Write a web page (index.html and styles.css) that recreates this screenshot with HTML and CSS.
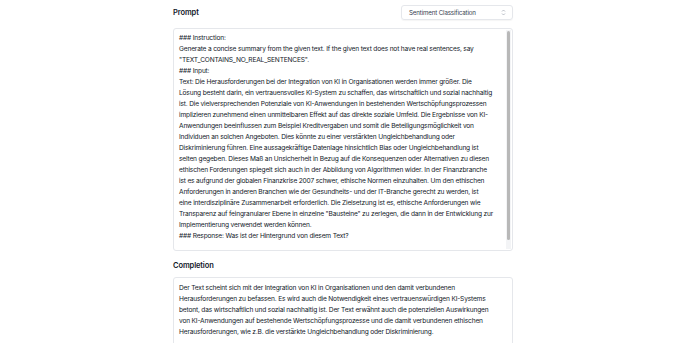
FILE: index.html
```html
<!DOCTYPE html>
<html>
<head>
<meta charset="utf-8">
<link rel="stylesheet" href="styles.css">
</head>
<body>
<div class="page">
  <div class="header">
    <div class="label">Prompt</div>
    <div class="select">
      <span>Sentiment Classification</span>
      <svg class="chev" width="5" height="7" viewBox="0 0 5 7"><path d="M1 2.5 L2.5 1 L4 2.5 M1 4.5 L2.5 6 L4 4.5" fill="none" stroke="#9ca3af" stroke-width="0.7"/></svg>
    </div>
  </div>
  <div class="box prompt">
    <div class="text">### Instruction:
Generate a concise summary from the given text. If the given text does not have real sentences, say
"TEXT_CONTAINS_NO_REAL_SENTENCES".
### Input:
Text: Die Herausforderungen bei der Integration von KI in Organisationen werden immer größer. Die
Lösung besteht darin, ein vertrauensvolles KI-System zu schaffen, das wirtschaftlich und sozial nachhaltig
ist. Die vielversprechenden Potenziale von KI-Anwendungen in bestehenden Wertschöpfungsprozessen
implizieren zunehmend einen unmittelbaren Effekt auf das direkte soziale Umfeld. Die Ergebnisse von KI-
Anwendungen beeinflussen zum Beispiel Kreditvergaben und somit die Beteiligungsmöglichkeit von
Individuen an solchen Angeboten. Dies könnte zu einer verstärkten Ungleichbehandlung oder
Diskriminierung führen. Eine aussagekräftige Datenlage hinsichtlich Bias oder Ungleichbehandlung ist
selten gegeben. Dieses Maß an Unsicherheit in Bezug auf die Konsequenzen oder Alternativen zu diesen
ethischen Forderungen spiegelt sich auch in der Abbildung von Algorithmen wider. In der Finanzbranche
ist es aufgrund der globalen Finanzkrise 2007 schwer, ethische Normen einzuhalten. Um den ethischen
Anforderungen in anderen Branchen wie der Gesundheits- und der IT-Branche gerecht zu werden, ist
eine interdisziplinäre Zusammenarbeit erforderlich. Die Zielsetzung ist es, ethische Anforderungen wie
Transparenz auf feingranularer Ebene in einzelne "Bausteine" zu zerlegen, die dann in der Entwicklung zur
Implementierung verwendet werden können.
### Response: Was ist der Hintergrund von diesem Text?
</div>
    <div class="scroll"><div class="thumb"></div></div>
  </div>
  <div class="label completion-label">Completion</div>
  <div class="box completion">
    <div class="text">Der Text scheint sich mit der Integration von KI in Organisationen und den damit verbundenen
Herausforderungen zu befassen. Es wird auch die Notwendigkeit eines vertrauenswürdigen KI-Systems
betont, das wirtschaftlich und sozial nachhaltig ist. Der Text erwähnt auch die potenziellen Auswirkungen
von KI-Anwendungen auf bestehende Wertschöpfungsprozesse und die damit verbundenen ethischen
Herausforderungen, wie z.B. die verstärkte Ungleichbehandlung oder Diskriminierung.</div>
  </div>
</div>
</body>
</html>
```

FILE: styles.css
```css
html, body {
  margin: 0;
  padding: 0;
  background: #ffffff;
}
body {
  font-family: Inter, "Noto Sans", sans-serif;
  color: #111827;
  overflow: hidden;
}
.page {
  width: 340px;
  margin: 0 auto;
  padding-top: 4px;
}
.header {
  display: flex;
  justify-content: space-between;
  align-items: center;
  height: 16px;
}
.label {
  font-size: 7.5px;
  font-weight: 600;
  letter-spacing: -0.1px;
  color: #111827;
}
.select {
  width: 112px;
  height: 15px;
  box-sizing: border-box;
  border: 1px solid #e5e7eb;
  border-radius: 3px;
  box-shadow: 0 1px 1px rgba(0,0,0,0.04);
  display: flex;
  align-items: center;
  justify-content: space-between;
  padding: 0 6px 0 7px;
  font-size: 6.2px;
  letter-spacing: -0.15px;
  color: #374151;
}
.chev {
  display: block;
}
.box {
  border: 1px solid #e5e7eb;
  border-radius: 3px;
  box-sizing: border-box;
  position: relative;
  background: #fff;
}
.prompt {
  margin-top: 8px;
  height: 223px;
  padding: 4px 14px 0 5px;
}
.text {
  white-space: pre;
  font-size: 6.6px;
  line-height: 11px;
  letter-spacing: -0.17px;
  color: #111827;
}
.scroll {
  position: absolute;
  top: 1px;
  right: 1px;
  bottom: 1px;
  width: 5px;
  background: #f3f4f6;
}
.thumb {
  margin: 1px 1px 0 1px;
  height: 209px;
  background: #b8b8b8;
  border-radius: 2px;
}
.completion-label {
  margin-top: 9px;
  height: 11px;
  line-height: 11px;
}
.completion {
  margin-top: 6px;
  height: 80px;
  padding: 5px 5px 0 5px;
}
```
